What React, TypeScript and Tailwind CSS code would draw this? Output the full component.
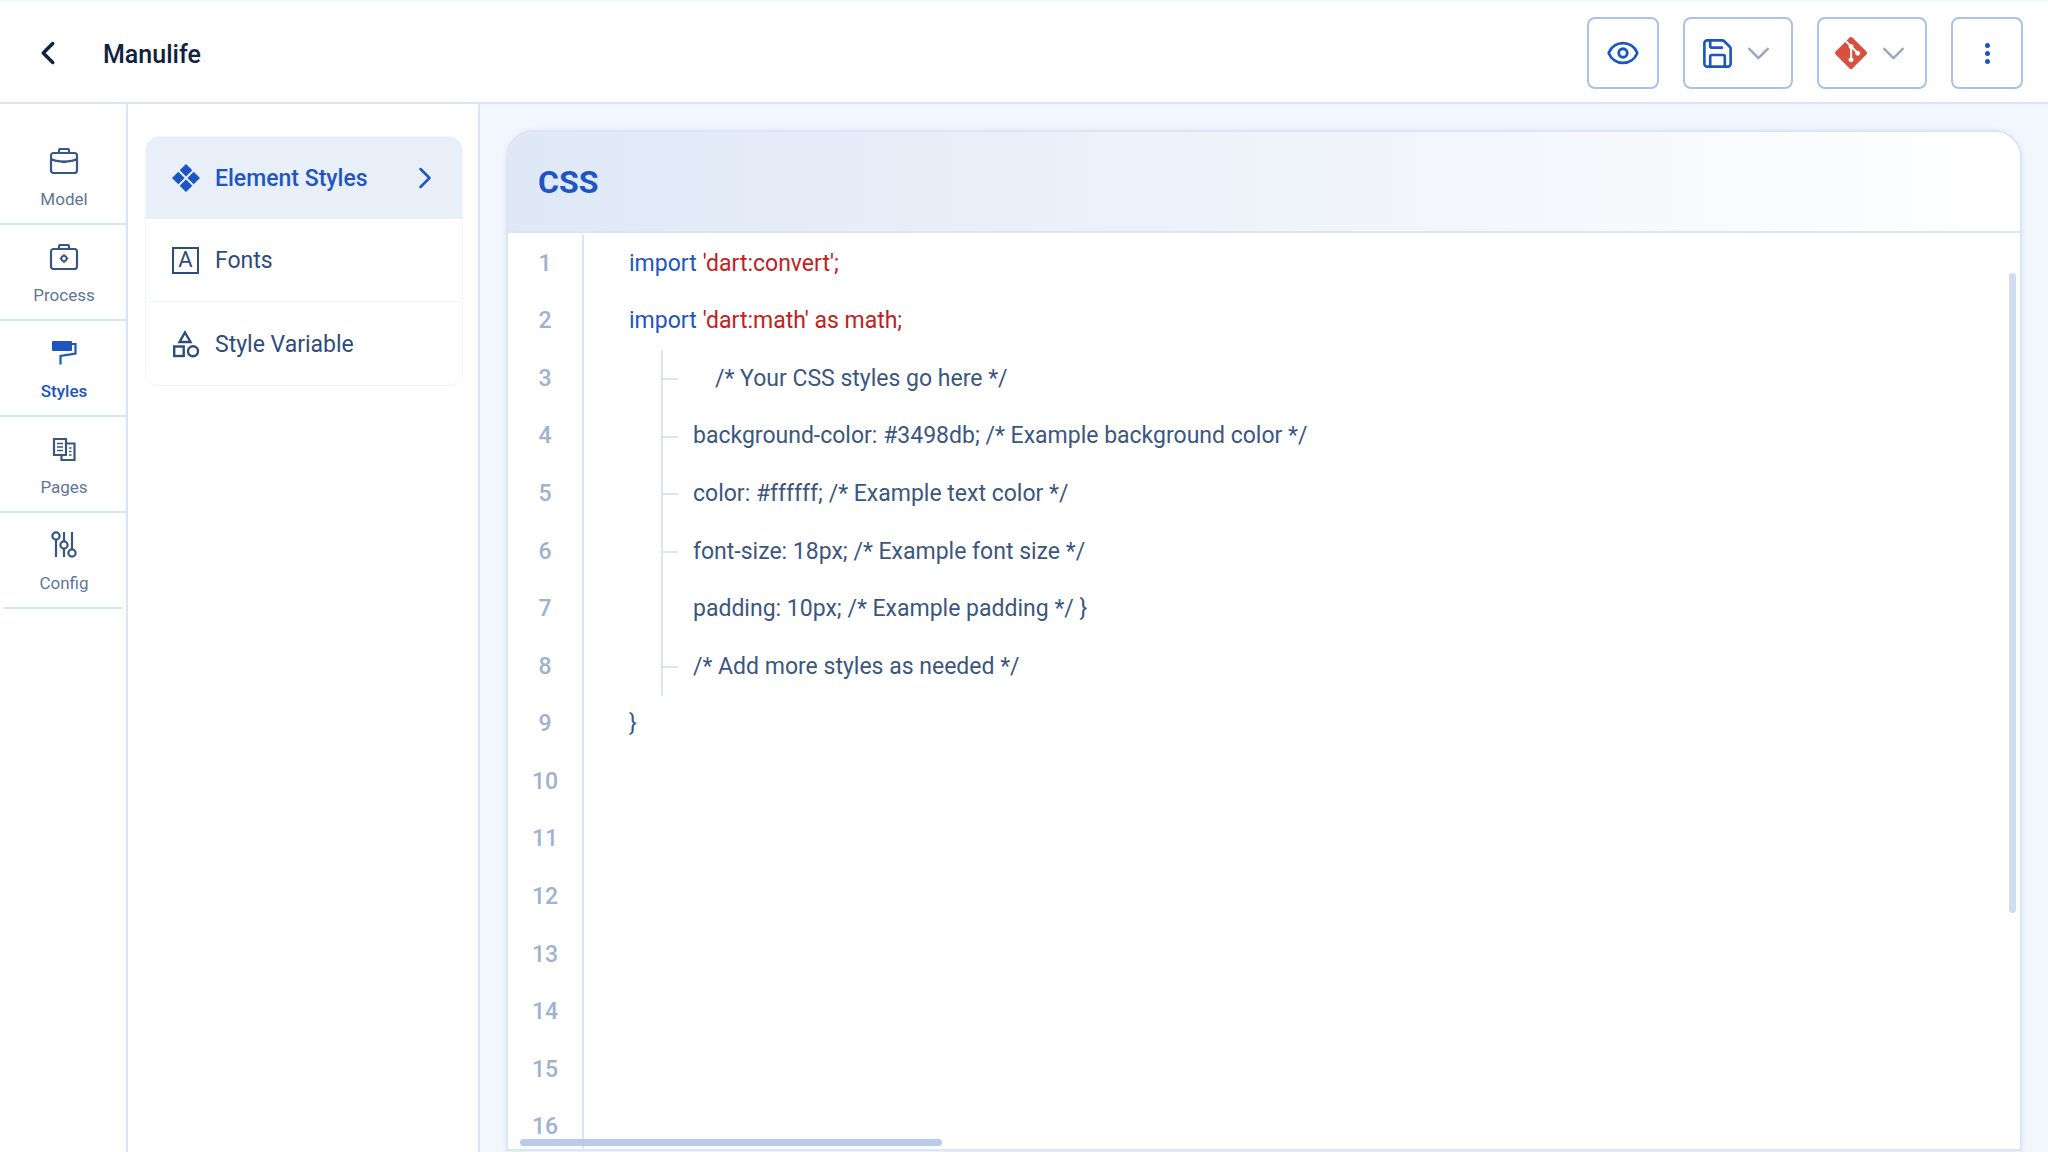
import { ChevronDown, ChevronLeft, ChevronRight, Eye, Save } from "lucide-react";
import { SiGit } from "react-icons/si";

const font = "font-['Roboto',sans-serif]";

function ModelIcon() {
    return (
        <svg width="30" height="26" viewBox="0 0 30 26" fill="none" stroke="currentColor" strokeWidth="2.2">
            <rect x="2" y="5" width="26" height="20" rx="2.5" />
            <path d="M10 5V2.5A1.5 1.5 0 0 1 11.5 1h7A1.5 1.5 0 0 1 20 2.5V5" />
            <path d="M2 11c6 3.5 20 3.5 26 0" />
            <path d="M13 14h4" />
        </svg>
    );
}

function ProcessIcon() {
    return (
        <svg width="30" height="26" viewBox="0 0 30 26" fill="none" stroke="currentColor" strokeWidth="2.2">
            <rect x="2" y="5" width="26" height="20" rx="2.5" />
            <path d="M10 5V2.5A1.5 1.5 0 0 1 11.5 1h7A1.5 1.5 0 0 1 20 2.5V5" />
            <circle cx="15" cy="14.5" r="2.6" strokeWidth="1.8" />
            <path d="M15 10v1.6M15 17.4V19M10.6 14.5h1.8M17.6 14.5h1.8" strokeWidth="1.4" />
        </svg>
    );
}

function StylesIcon() {
    return (
        <svg width="26" height="26" viewBox="0 0 26 26" fill="none">
            <rect x="1" y="1" width="20" height="10" rx="1" fill="currentColor" />
            <path d="M21 4h3.5v9.5L9.5 16v8.5" stroke="currentColor" strokeWidth="2.2" />
        </svg>
    );
}

function PagesIcon() {
    return (
        <svg width="24" height="24" viewBox="0 0 24 24" fill="none" stroke="currentColor" strokeWidth="2.2">
            <path d="M14 18H2V2h12v16Z" />
            <path d="M14 6.5h8.5V23H9.5v-5" />
            <path d="M5 6.5h6M5 10h6M5 13.5h6M17 11h2.5M17 14.5h2.5M17 18h2.5" strokeWidth="1.6" />
        </svg>
    );
}

function ConfigIcon() {
    return (
        <svg width="28" height="28" viewBox="0 0 28 28" fill="none" stroke="currentColor" strokeWidth="2.2">
            <circle cx="6" cy="5" r="3.6" />
            <path d="M6 8.6V26" />
            <circle cx="14" cy="14" r="3.6" />
            <path d="M14 1v9.4M14 17.6V26" />
            <circle cx="22" cy="22" r="3.6" />
            <path d="M22 1v17.4" />
        </svg>
    );
}

function DiamondsIcon() {
    return (
        <svg width="28" height="28" viewBox="0 0 28 28" fill="currentColor">
            <path d="M14 0l6.3 6.3-6.3 6.3-6.3-6.3zM6.3 7.7l6.3 6.3-6.3 6.3L0 14zM21.7 7.7L28 14l-6.3 6.3-6.3-6.3zM14 15.4l6.3 6.3L14 28l-6.3-6.3z" />
        </svg>
    );
}

function ShapesIcon() {
    return (
        <svg width="28" height="28" viewBox="0 0 28 28" fill="none" stroke="currentColor" strokeWidth="2.4">
            <path d="M13 2.5 18.5 12h-11z" />
            <rect x="2.2" y="16.5" width="9.5" height="9.5" />
            <circle cx="21" cy="21.3" r="5" />
        </svg>
    );
}

const rail = [
    { label: "Model", icon: <ModelIcon />, first: true },
    { label: "Process", icon: <ProcessIcon /> },
    { label: "Styles", icon: <StylesIcon />, active: true },
    { label: "Pages", icon: <PagesIcon /> },
    { label: "Config", icon: <ConfigIcon />, last: true },
];

const code = [
    { tick: true, text: "/* Your CSS styles go here */", extra: true },
    { tick: true, text: "background-color: #3498db; /* Example background color */" },
    { tick: true, text: "color: #ffffff; /* Example text color */" },
    { tick: true, text: "font-size: 18px; /* Example font size */" },
    { tick: false, text: "padding: 10px; /* Example padding */ }" },
    { tick: true, text: "/* Add more styles as needed */" },
];

export default function App() {
    return (
        <div className={`flex h-[1152px] w-[2048px] flex-col overflow-hidden bg-white ${font}`}>
            <header className="flex h-[104px] shrink-0 items-center border-t-2 border-b-2 border-t-[#f2f6fd] border-b-[#d9e4f6] bg-white pt-[2px] pr-[25px] pl-[29px]">
                <ChevronLeft className="h-[38px] w-[38px] text-[#0f2240]" strokeWidth={2.2} />
                <h1 className="ml-[36px] pt-[3px] text-[25px] font-medium text-[#0f2240]">Manulife</h1>
                <div className="ml-auto flex gap-[24px]">
                    <button className="flex h-[72px] w-[72px] items-center justify-center rounded-lg border-2 border-[#a9c2ec]">
                        <Eye className="h-[34px] w-[34px] text-[#1d55c4]" strokeWidth={2} />
                    </button>
                    <button className="flex h-[72px] w-[110px] items-center justify-center gap-[5px] rounded-lg border-2 border-[#a9c2ec]">
                        <Save className="h-[35px] w-[35px] text-[#1d55c4]" strokeWidth={1.8} />
                        <ChevronDown className="h-[37px] w-[37px] text-[#9aa9c2]" strokeWidth={1.6} />
                    </button>
                    <button className="flex h-[72px] w-[110px] items-center justify-center gap-[8px] rounded-lg border-2 border-[#a9c2ec] pl-[3px]">
                        <SiGit className="h-[32px] w-[32px] text-[#d8503f]" />
                        <ChevronDown className="h-[37px] w-[37px] text-[#9aa9c2]" strokeWidth={1.6} />
                    </button>
                    <button className="flex h-[72px] w-[72px] flex-col items-center justify-center gap-[3px] rounded-lg border-2 border-[#a9c2ec]">
                        <span className="h-[5px] w-[5px] rounded-full bg-[#1d55c4]" />
                        <span className="h-[5px] w-[5px] rounded-full bg-[#1d55c4]" />
                        <span className="h-[5px] w-[5px] rounded-full bg-[#1d55c4]" />
                    </button>
                </div>
            </header>

            <div className="flex min-h-0 flex-1">
                <nav className="w-[128px] shrink-0 border-r-2 border-[#d9e4f6]">
                    {rail.map((item) => (
                        <div
                            key={item.label}
                            className={`flex flex-col items-center justify-end gap-[12px] border-b-2 border-[#d9e4f6] pb-[13px] pl-[2px] ${
                                item.first ? "h-[121px]" : "h-[96px]"
                            } ${item.last ? "mx-[3px]" : ""} ${item.active ? "text-[#1d55c4]" : "text-[#3b5780]"}`}
                        >
                            <div className="flex h-[30px] items-center justify-center">{item.icon}</div>
                            <span className={`text-[17px] leading-[22px] ${item.active ? "font-medium" : "text-[#5f7699]"}`}>
                                {item.label}
                            </span>
                        </div>
                    ))}
                </nav>

                <aside className="w-[352px] shrink-0 border-r-2 border-[#d9e4f6] pt-[32px] pl-[17px]">
                    <div className="w-[318px] overflow-hidden rounded-[14px] border border-[#f0f4fb]">
                        <div className="flex h-[82px] items-center bg-[#e8eff9] pr-[19px] pl-[26px] text-[#1d55c4]">
                            <DiamondsIcon />
                            <span className="ml-[15px] pt-[2px] text-[23px] font-medium">Element Styles</span>
                            <ChevronRight className="ml-auto h-[36px] w-[36px]" strokeWidth={1.7} />
                        </div>
                        <div className="flex h-[83px] items-center border-b border-[#f0f4fb] pl-[26px] text-[#2f4d78]">
                            <span className="flex h-[27px] w-[27px] items-center justify-center border-2 border-[#2f4d78] text-[22px] leading-none">
                                A
                            </span>
                            <span className="ml-[16px] pt-[3px] text-[23px]">Fonts</span>
                        </div>
                        <div className="flex h-[83px] items-center pl-[26px] text-[#2f4d78]">
                            <ShapesIcon />
                            <span className="ml-[15px] pt-[4px] text-[23px]">Style Variable</span>
                        </div>
                    </div>
                </aside>

                <main className="min-w-0 flex-1 bg-[#f2f6fd] px-[26px] pt-[26px]">
                    <div className="relative h-[1021px] overflow-hidden rounded-t-[28px] border-2 border-[#dbe5f6] bg-white shadow-[0_0_5px_#dfe8f8]">
                        <div className="flex h-[101px] items-center border-b-2 border-[#dbe5f6] bg-gradient-to-r from-[#dfe8f6] to-white pl-[30px]">
                            <h2 className="text-[32px] font-bold text-[#1d55c4]">CSS</h2>
                        </div>
                        <div className="flex pt-[2px]">
                            <div className="w-[76px] shrink-0 border-r-2 border-[#dbe5f6] pb-[40px]">
                                {Array.from({ length: 16 }, (_, i) => (
                                    <div key={i} className="flex h-[57.6px] items-center justify-center text-[23px] font-medium text-[#9fb2d0]">
                                        {i + 1}
                                    </div>
                                ))}
                            </div>
                            <div className="flex-1 pl-[45px] text-[23px] text-[#3b5780]">
                                <div className="flex h-[57.6px] items-center">
                                    <span className="text-[#1d55c4]">import</span>
                                    <span className="ml-[6px] text-[#c4201c]">'dart:convert';</span>
                                </div>
                                <div className="flex h-[57.6px] items-center">
                                    <span className="text-[#1d55c4]">import</span>
                                    <span className="ml-[6px] text-[#c4201c]">'dart:math' as math;</span>
                                </div>
                                <div className="ml-[32px] border-l-2 border-[#dbe5f6]">
                                    {code.map((line, i) => (
                                        <div key={i} className="flex h-[57.6px] items-center">
                                            <span className={`h-[2px] w-[15px] ${line.tick ? "bg-[#dbe5f6]" : ""}`} />
                                            <span className={line.extra ? "ml-[37px]" : "ml-[15px]"}>{line.text}</span>
                                        </div>
                                    ))}
                                </div>
                                <div className="flex h-[57.6px] items-center">{"}"}</div>
                            </div>
                        </div>
                        <div className="absolute top-[141px] right-[4px] h-[640px] w-[7px] rounded-full bg-[#d0dcf2]" />
                        <div className="absolute bottom-[3px] left-[12px] h-[7px] w-[422px] rounded-full bg-[#b9cbeb]" />
                    </div>
                </main>
            </div>
        </div>
    );
}
